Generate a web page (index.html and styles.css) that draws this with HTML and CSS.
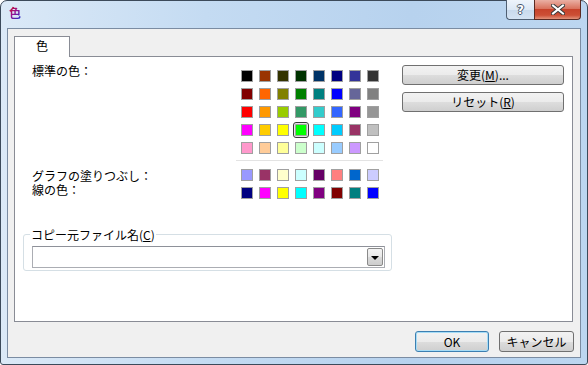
FILE: index.html
```html
<!DOCTYPE html>
<html>
<head>
  <meta charset="utf-8">
  <title>色</title>
  <link rel="stylesheet" href="styles.css">
</head>
<body>
  <div class="window">
    <div class="titlebar">
      <span class="app-icon">色</span>
      <div class="caption-buttons">
        <span class="cap-btn help">?</span>
        <span class="cap-btn close">
          <svg width="14" height="11" viewBox="0 0 14 11">
            <path d="M2 1.5 L12 9.5 M12 1.5 L2 9.5" stroke="#3a3a3a" stroke-width="4" stroke-linecap="square"/>
            <path d="M2 1.5 L12 9.5 M12 1.5 L2 9.5" stroke="#ffffff" stroke-width="2" stroke-linecap="square"/>
          </svg>
        </span>
      </div>
    </div>

    <div class="client">
      <div class="tabs">
        <div class="tab">色</div>
      </div>

      <div class="tab-panel">
        <div class="colors-row">
          <div class="labels">
            <div class="label">標準の色：</div>
            <div class="label fill-label">グラフの塗りつぶし：</div>
            <div class="label">線の色：</div>
          </div>

          <div class="palette">
            <div class="swatch-grid">
              <span class="cell"><span class="swatch" style="background:#000000"></span></span>
              <span class="cell"><span class="swatch" style="background:#993300"></span></span>
              <span class="cell"><span class="swatch" style="background:#333300"></span></span>
              <span class="cell"><span class="swatch" style="background:#003300"></span></span>
              <span class="cell"><span class="swatch" style="background:#003366"></span></span>
              <span class="cell"><span class="swatch" style="background:#000080"></span></span>
              <span class="cell"><span class="swatch" style="background:#333399"></span></span>
              <span class="cell"><span class="swatch" style="background:#333333"></span></span>

              <span class="cell"><span class="swatch" style="background:#800000"></span></span>
              <span class="cell"><span class="swatch" style="background:#ff6600"></span></span>
              <span class="cell"><span class="swatch" style="background:#808000"></span></span>
              <span class="cell"><span class="swatch" style="background:#008000"></span></span>
              <span class="cell"><span class="swatch" style="background:#008080"></span></span>
              <span class="cell"><span class="swatch" style="background:#0000ff"></span></span>
              <span class="cell"><span class="swatch" style="background:#666699"></span></span>
              <span class="cell"><span class="swatch" style="background:#808080"></span></span>

              <span class="cell"><span class="swatch" style="background:#ff0000"></span></span>
              <span class="cell"><span class="swatch" style="background:#ff9900"></span></span>
              <span class="cell"><span class="swatch" style="background:#99cc00"></span></span>
              <span class="cell"><span class="swatch" style="background:#339966"></span></span>
              <span class="cell"><span class="swatch" style="background:#33cccc"></span></span>
              <span class="cell"><span class="swatch" style="background:#3366ff"></span></span>
              <span class="cell"><span class="swatch" style="background:#800080"></span></span>
              <span class="cell"><span class="swatch" style="background:#969696"></span></span>

              <span class="cell"><span class="swatch" style="background:#ff00ff"></span></span>
              <span class="cell"><span class="swatch" style="background:#ffcc00"></span></span>
              <span class="cell"><span class="swatch" style="background:#ffff00"></span></span>
              <span class="cell selected"><span class="swatch" style="background:#00ff00"></span></span>
              <span class="cell"><span class="swatch" style="background:#00ffff"></span></span>
              <span class="cell"><span class="swatch" style="background:#00ccff"></span></span>
              <span class="cell"><span class="swatch" style="background:#993366"></span></span>
              <span class="cell"><span class="swatch" style="background:#c0c0c0"></span></span>

              <span class="cell"><span class="swatch" style="background:#ff99cc"></span></span>
              <span class="cell"><span class="swatch" style="background:#ffcc99"></span></span>
              <span class="cell"><span class="swatch" style="background:#ffff99"></span></span>
              <span class="cell"><span class="swatch" style="background:#ccffcc"></span></span>
              <span class="cell"><span class="swatch" style="background:#ccffff"></span></span>
              <span class="cell"><span class="swatch" style="background:#99ccff"></span></span>
              <span class="cell"><span class="swatch" style="background:#cc99ff"></span></span>
              <span class="cell"><span class="swatch" style="background:#ffffff"></span></span>
            </div>

            <div class="palette-sep"></div>

            <div class="swatch-grid">
              <span class="cell"><span class="swatch" style="background:#9999ff"></span></span>
              <span class="cell"><span class="swatch" style="background:#993366"></span></span>
              <span class="cell"><span class="swatch" style="background:#ffffcc"></span></span>
              <span class="cell"><span class="swatch" style="background:#ccffff"></span></span>
              <span class="cell"><span class="swatch" style="background:#660066"></span></span>
              <span class="cell"><span class="swatch" style="background:#ff8080"></span></span>
              <span class="cell"><span class="swatch" style="background:#0066cc"></span></span>
              <span class="cell"><span class="swatch" style="background:#ccccff"></span></span>

              <span class="cell"><span class="swatch" style="background:#000080"></span></span>
              <span class="cell"><span class="swatch" style="background:#ff00ff"></span></span>
              <span class="cell"><span class="swatch" style="background:#ffff00"></span></span>
              <span class="cell"><span class="swatch" style="background:#00ffff"></span></span>
              <span class="cell"><span class="swatch" style="background:#800080"></span></span>
              <span class="cell"><span class="swatch" style="background:#800000"></span></span>
              <span class="cell"><span class="swatch" style="background:#008080"></span></span>
              <span class="cell"><span class="swatch" style="background:#0000ff"></span></span>
            </div>
          </div>

          <div class="side-buttons">
            <button class="btn">変更(<u>M</u>)...</button>
            <button class="btn">リセット(<u>R</u>)</button>
          </div>
        </div>

        <fieldset class="source-file">
          <legend>コピー元ファイル名(<u>C</u>)</legend>
          <div class="combo">
            <span class="combo-drop"></span>
          </div>
        </fieldset>
      </div>

      <div class="dialog-buttons">
        <button class="btn btn-default">OK</button>
        <button class="btn btn-cancel">キャンセル</button>
      </div>
    </div>
  </div>
</body>
</html>
```

FILE: styles.css
```css
body {
  margin: 0;
  font-family: "Noto Sans CJK JP", "Liberation Sans", sans-serif;
  font-size: 12px;
  color: #000;
  background: #fff;
}

.window {
  box-sizing: border-box;
  width: 588px;
  height: 365px;
  padding: 0 6px 6px 6px;
  border: 1px solid #3c4a5a;
  border-radius: 7px 7px 3px 3px;
  background: linear-gradient(to right, #dbe9f7 0%, #c4dbf2 35%, #b7d2ee 70%, #bcd6f0 100%);
  display: flex;
  flex-direction: column;
}

/* title bar */
.titlebar {
  height: 27px;
  display: flex;
  align-items: flex-start;
}

.app-icon {
  margin: 5px 0 0 2px;
  font-size: 12px;
  font-weight: bold;
  line-height: 14px;
  background: linear-gradient(135deg, #d01010 0%, #9a1090 45%, #1030d0 100%);
  -webkit-background-clip: text;
  background-clip: text;
  color: transparent;
}

.caption-buttons {
  display: flex;
  margin-left: auto;
}

.cap-btn {
  box-sizing: border-box;
  height: 20px;
  margin-top: -1px;
  display: flex;
  align-items: center;
  justify-content: center;
  border: 1px solid #4f5f72;
  border-top: none;
}

.help {
  width: 28px;
  border-radius: 0 0 0 4px;
  border-right: none;
  background: linear-gradient(#eef4fb 0%, #dce8f5 50%, #c8d9ec 51%, #d4e3f3 100%);
  color: #fff;
  font-family: "DejaVu Sans", sans-serif;
  font-weight: bold;
  font-size: 12px;
  text-shadow: -1px 0 #44556a, 1px 0 #44556a, 0 -1px #44556a, 0 1px #44556a;
}

.close {
  width: 47px;
  border-radius: 0 0 4px 0;
  border-color: #5a2a22;
  background: linear-gradient(#eab0a4 0%, #d9735e 45%, #c7432b 50%, #cc4f35 80%, #e2927a 100%);
}

/* client area */
.client {
  flex: 1;
  border: 1px solid #7b8ca2;
  background: #f0f0f0;
  display: flex;
  flex-direction: column;
}

.tabs {
  display: flex;
  padding: 7px 0 0 6px;
}

.tab {
  box-sizing: border-box;
  width: 56px;
  height: 21px;
  margin-bottom: -1px;
  border: 1px solid #898c95;
  border-bottom: none;
  background: #fff;
  text-align: center;
  line-height: 18px;
  position: relative;
  z-index: 1;
}

.tab-panel {
  box-sizing: border-box;
  height: 266px;
  margin: 0 7px 0 6px;
  border: 1px solid #898c95;
  background: #fff;
}

.colors-row {
  display: flex;
  padding-top: 8px;
}

.labels {
  box-sizing: border-box;
  width: 223px;
  padding-left: 17px;
}

.label {
  font-family: "Liberation Sans", "Noto Sans CJK JP", sans-serif;
  line-height: 14px;
  white-space: nowrap;
}

.fill-label {
  margin-top: 91px;
}

.palette {
  width: 144px;
  margin-top: 2px;
}

.swatch-grid {
  display: grid;
  grid-template-columns: repeat(8, 18px);
  grid-auto-rows: 18px;
}

.cell {
  display: flex;
  align-items: center;
  justify-content: center;
}

.swatch {
  box-sizing: border-box;
  width: 12px;
  height: 12px;
  border: 1px solid #a0a0a0;
}

.selected .swatch {
  border-radius: 1px;
  box-shadow: 0 0 0 1px #e6e6e6;
  outline: 1px solid #3a3a3a;
  outline-offset: 1px;
}

.palette-sep {
  height: 1px;
  margin: 3px -1px 5px -2px;
  background: #e3e3e3;
}

.side-buttons {
  display: flex;
  flex-direction: column;
  gap: 7px;
  margin-left: 20px;
}

.btn {
  box-sizing: border-box;
  height: 20px;
  padding: 0;
  border: 1px solid #707070;
  border-radius: 3px;
  background: linear-gradient(#f2f2f2 0%, #ebebeb 50%, #dddddd 51%, #cfcfcf 100%);
  font-family: inherit;
  font-size: 12px;
  line-height: 16px;
  color: #000;
}

.side-buttons .btn {
  width: 162px;
}

/* group box */
.source-file {
  box-sizing: border-box;
  width: 369px;
  margin: 25px 0 0 8px;
  padding: 4px 6px 2px 8px;
  border: 1px solid #d5dfe5;
  border-radius: 3px;
}

.source-file legend {
  margin-left: -2px;
  padding: 0 1px;
  line-height: 15px;
}

.combo {
  box-sizing: border-box;
  height: 22px;
  border: 1px solid #abadb3;
  border-top-color: #8e9199;
  background: #fff;
  display: flex;
  justify-content: flex-end;
  align-items: center;
  padding-right: 1px;
}

.combo-drop {
  box-sizing: border-box;
  width: 16px;
  height: 18px;
  border: 1px solid #8a8a8a;
  border-radius: 2px;
  background: linear-gradient(#f4f4f4 0%, #e8e8e8 50%, #dadada 51%, #cdcdcd 100%);
  display: flex;
  align-items: center;
  justify-content: center;
}

.combo-drop::after {
  content: "";
  border-left: 4px solid transparent;
  border-right: 4px solid transparent;
  border-top: 4px solid #000;
  margin-top: 1px;
}

/* bottom buttons */
.dialog-buttons {
  display: flex;
  justify-content: flex-end;
  gap: 10px;
  margin-top: 9px;
  padding-right: 6px;
}

.dialog-buttons .btn {
  height: 21px;
}

.btn-default {
  width: 74px;
  border-color: #3c7fb1;
  box-shadow: inset 0 0 0 1px #a6dcf6;
}

.btn-cancel {
  width: 75px;
}
```
